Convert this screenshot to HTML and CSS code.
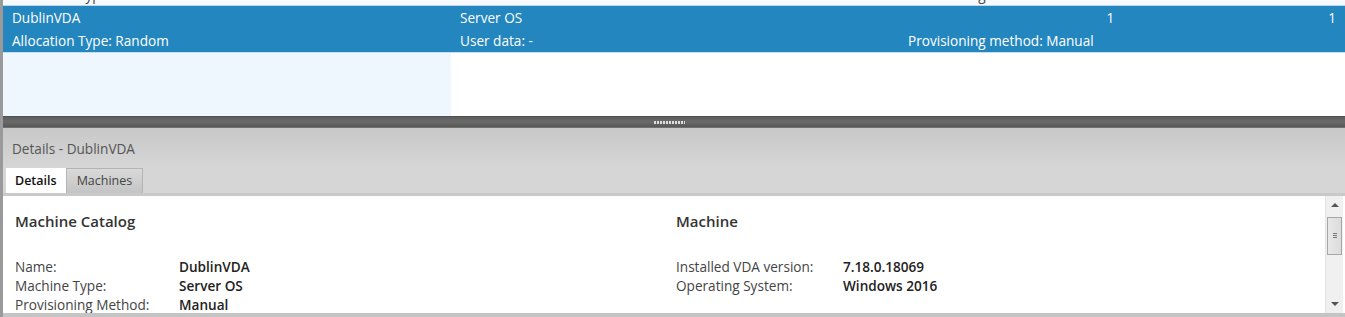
FILE: index.html
```html
<!DOCTYPE html>
<html lang="en">
<head>
  <meta charset="UTF-8" />
  <title>Machine Catalogs - DublinVDA</title>
  <link rel="stylesheet" href="styles.css">
</head>
<body>
  <main class="studio">
    <section class="grid">
      <div class="row row-cut">
        <div class="cell c1">Allocation Type: Static</div>
        <div class="cell c2"></div>
        <div class="cell c3">Provisioning method: Manual</div>
      </div>
      <div class="row selected">
        <div class="cell c1">
          <div>DublinVDA</div>
          <div>Allocation Type: Random</div>
        </div>
        <div class="cell c2">
          <div>Server OS</div>
          <div>User data: -</div>
        </div>
        <div class="cell c3">
          <div class="counts"><span class="num">1</span><span class="num">1</span></div>
          <div>Provisioning method: Manual</div>
        </div>
      </div>
      <div class="row empty">
        <div class="cell c1"></div>
        <div class="cell c2"></div>
      </div>
    </section>

    <div class="splitter"><span class="grip"></span></div>

    <section class="details">
      <div class="details-title">Details - DublinVDA</div>
      <nav class="tabs">
        <span class="tab active">Details</span>
        <span class="tab">Machines</span>
      </nav>
      <div class="panel">
        <div class="panel-body">
          <div class="group catalog">
            <h3>Machine Catalog</h3>
            <dl>
              <dt>Name:</dt><dd>DublinVDA</dd>
              <dt>Machine Type:</dt><dd>Server OS</dd>
              <dt>Provisioning Method:</dt><dd>Manual</dd>
            </dl>
          </div>
          <div class="group machine">
            <h3>Machine</h3>
            <dl>
              <dt>Installed VDA version:</dt><dd>7.18.0.18069</dd>
              <dt>Operating System:</dt><dd>Windows 2016</dd>
            </dl>
          </div>
        </div>
        <div class="scrollbar">
          <span class="arrow up"></span>
          <span class="thumb"><i></i></span>
          <span class="arrow down"></span>
        </div>
      </div>
    </section>
  </main>
</body>
</html>
```

FILE: styles.css
```css
body {
  margin: 0;
  font-family: "Open Sans", "Noto Sans", sans-serif;
  font-size: 13.6px;
  color: #333;
  background: #fff;
  overflow: hidden;
}

.studio {
  width: 1345px;
  height: 317px;
  display: flex;
  flex-direction: column;
  border-left: 3px solid #9a9a9a;
  box-sizing: border-box;
}

/* top grid */
.grid {
  height: 116px;
  flex-shrink: 0;
  display: flex;
  flex-direction: column;
  background: #fff;
}

.row {
  display: flex;
}

.cell.c1 {
  width: 448px;
  padding-left: 9px;
  box-sizing: border-box;
}

.cell.c2 {
  width: 457px;
  padding-left: 9px;
  box-sizing: border-box;
}

.cell.c3 {
  flex: 1;
}

.row-cut {
  height: 5px;
  flex-shrink: 0;
  overflow: hidden;
  color: #444;
  background: #f7fafd;
  border-bottom: 1px solid #bcd8ee;
}

.row-cut .cell {
  line-height: 23px;
  margin-top: -17px;
}

.selected {
  height: 46px;
  flex-shrink: 0;
  background: #2486bf;
  color: #fff;
  line-height: 23px;
}

.counts {
  display: flex;
  justify-content: flex-end;
  padding-right: 9px;
}

.counts .num:first-child {
  margin-right: 214px;
}

.empty {
  flex: 1;
  border-top: 1px solid #c7def0;
}

.empty .c1 {
  background: #eef6fe;
}

/* splitter */
.splitter {
  height: 12px;
  flex-shrink: 0;
  background: linear-gradient(#444 0, #5e5e5e 1px, #6a6a6a 6px, #575757 11px, #8a8a8a 12px);
  display: flex;
  justify-content: center;
  align-items: center;
}

.grip {
  width: 31px;
  height: 3px;
  margin-left: -10px;
  background: repeating-linear-gradient(90deg, #ddd 0 2px, transparent 2px 3px);
}

/* details pane */
.details {
  flex: 1;
  min-height: 0;
  display: flex;
  flex-direction: column;
  background: linear-gradient(#c8c8c8, #d6d6d6 40px);
}

.details-title {
  height: 40px;
  flex-shrink: 0;
  line-height: 41px;
  padding-left: 9px;
  color: #555;
}

.tabs {
  display: flex;
  flex-shrink: 0;
  padding-left: 3px;
  height: 25px;
  align-items: flex-end;
  font-size: 12.5px;
}

.tab {
  height: 24px;
  line-height: 24px;
  padding: 0 10px;
  border: 1px solid #b4b4b4;
  border-bottom: none;
  background: linear-gradient(#d9d9d9, #c4c4c4);
  color: #444;
}

.tab.active {
  background: #fff;
  color: #111;
  font-weight: 600;
  border-color: #fff;
  padding: 0 8px;
}

.panel {
  flex: 1;
  min-height: 0;
  display: flex;
  background: #fff;
  border-top: 3px solid #c9c9c9;
  border-bottom: 4px solid #c4c4c4;
  overflow: hidden;
}

.panel-body {
  flex: 1;
  min-width: 0;
  display: flex;
  padding: 13px 0 0 12px;
}

.group.catalog {
  width: 661px;
  flex-shrink: 0;
}

.group.machine {
  flex: 1;
}

h3 {
  margin: 0 0 24px;
  font-size: 15px;
  font-weight: 600;
  color: #333;
  line-height: 24px;
}

dl {
  margin: 0;
  display: grid;
  grid-template-columns: 164px 1fr;
  line-height: 19px;
}

.machine dl {
  grid-template-columns: 167px 1fr;
}

dt {
  color: #444;
}

dd {
  margin: 0;
  font-weight: 600;
  color: #222;
}

.scrollbar {
  width: 17px;
  flex-shrink: 0;
  background: #f0f0f0;
  border-left: 1px solid #e4e4e4;
  margin-right: 2px;
  display: flex;
  flex-direction: column;
  align-items: center;
}

.arrow {
  width: 0;
  height: 0;
  border-left: 4px solid transparent;
  border-right: 4px solid transparent;
}

.arrow.up {
  margin-top: 7px;
  border-bottom: 4px solid #555;
}

.arrow.down {
  margin-top: auto;
  margin-bottom: 7px;
  border-top: 4px solid #555;
}

.thumb {
  margin-top: 10px;
  width: 15px;
  height: 38px;
  flex-shrink: 0;
  box-sizing: border-box;
  border: 1px solid #a6a6a6;
  background: linear-gradient(90deg, #e8e8e8, #dcdcdc);
  display: flex;
  align-items: center;
  justify-content: center;
}

.thumb i {
  width: 4px;
  height: 6px;
  background: repeating-linear-gradient(#777 0 1px, transparent 1px 2px);
}
```
